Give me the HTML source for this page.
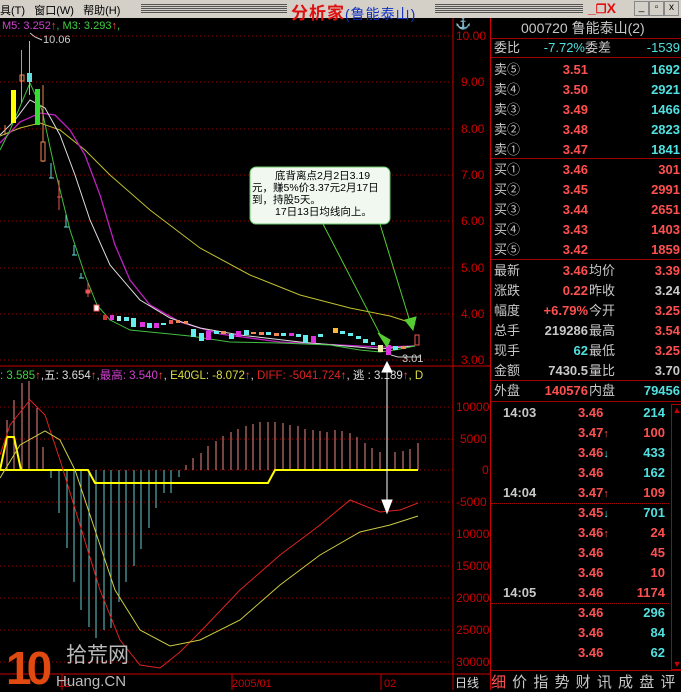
<!DOCTYPE html>
<html><head><meta charset="utf-8"><style>
*{margin:0;padding:0}
body{width:681px;height:690px;overflow:hidden;background:#000;font-family:"Liberation Sans","Noto Sans CJK SC",sans-serif;position:relative}
.menu{position:absolute;left:0;top:0;width:681px;height:18px;background:#d4d0c8;font-size:12px;color:#000}
.p{position:absolute;left:490px;top:18px;width:191px;height:672px;background:#000;border-left:1px solid #c00}
.t{position:absolute;font-size:13px;white-space:nowrap;line-height:16px}
.w{color:#c8c8c8}.r{color:#ff5050}.c{color:#50e0e0}
.hl{position:absolute;left:0;width:191px;height:1px;background:#a00000}
.col{position:absolute;font-size:13px;font-weight:bold}
.col div{height:20px;line-height:20px;white-space:nowrap}
.ar{font-size:11px;display:inline-block;width:10px;line-height:20px}
.btn{position:absolute;top:1px;width:13px;height:13px;border:1px solid #888;background:#d4d0c8;font-size:10px;line-height:12px;text-align:center}
</style></head><body>
<div class="menu">
<span style="position:absolute;left:0;top:2px;font-size:11px">具(T)&nbsp;&nbsp;&nbsp;窗口(W)&nbsp;&nbsp;&nbsp;帮助(H)</span>
<div style="position:absolute;left:141px;top:4px;width:146px;height:10px;background:repeating-linear-gradient(#555 0 1px,#d4d0c8 1px 2px)"></div>
<span style="position:absolute;left:291px;top:-1px;font-size:17px;font-weight:bold;color:#e01010;letter-spacing:1px;white-space:nowrap">分析家<span style="color:#1030c0;font-size:14px;font-weight:normal">(鲁能泰山)</span></span>
<div style="position:absolute;left:435px;top:4px;width:148px;height:10px;background:repeating-linear-gradient(#555 0 1px,#d4d0c8 1px 2px)"></div>
<span style="position:absolute;left:588px;top:0px;color:#e01010;font-weight:bold;font-size:14px">_<span style="font-size:12px">❐</span>X</span>
<span class="btn" style="left:634px">_</span>
<span class="btn" style="left:649px">▫</span>
<span class="btn" style="left:664px">x</span>
</div>

<svg style="position:absolute;left:0;top:18px" width="490" height="672" viewBox="0 18 490 672" font-family="Liberation Sans, Noto Sans CJK SC, sans-serif">
<g stroke="#900" stroke-dasharray="1,3" stroke-width="1">
<line x1="0" y1="36" x2="453" y2="36"/><line x1="0" y1="82" x2="453" y2="82"/><line x1="0" y1="129" x2="453" y2="129"/><line x1="0" y1="175" x2="453" y2="175"/><line x1="0" y1="221" x2="453" y2="221"/><line x1="0" y1="268" x2="453" y2="268"/><line x1="0" y1="314" x2="453" y2="314"/><line x1="0" y1="360" x2="453" y2="360"/>
<line x1="0" y1="407" x2="453" y2="407"/><line x1="0" y1="439" x2="453" y2="439"/><line x1="0" y1="470" x2="453" y2="470"/><line x1="0" y1="502" x2="453" y2="502"/><line x1="0" y1="534" x2="453" y2="534"/><line x1="0" y1="566" x2="453" y2="566"/><line x1="0" y1="598" x2="453" y2="598"/><line x1="0" y1="630" x2="453" y2="630"/><line x1="0" y1="662" x2="453" y2="662"/>
</g>
<g stroke="#c00" stroke-width="1">
<line x1="453" y1="18" x2="453" y2="690"/><line x1="0" y1="366" x2="490" y2="366"/><line x1="0" y1="674" x2="490" y2="674"/>
<line x1="62" y1="674" x2="62" y2="690"/><line x1="232" y1="674" x2="232" y2="690"/><line x1="381" y1="674" x2="381" y2="690"/>
</g>
<g fill="#c00" font-size="12">
<text x="456" y="40">10.00</text><text x="461" y="86">9.00</text><text x="461" y="133">8.00</text><text x="461" y="179">7.00</text><text x="461" y="225">6.00</text><text x="461" y="272">5.00</text><text x="461" y="318">4.00</text><text x="461" y="364">3.00</text>
<text x="456" y="411">10000</text><text x="460" y="443">5000</text><text x="482" y="474">0</text><text x="456" y="506">-5000</text><text x="456" y="538">10000</text><text x="456" y="570">15000</text><text x="456" y="602">20000</text><text x="456" y="634">25000</text><text x="456" y="666">30000</text>
</g>
<text x="455" y="27" fill="#e00" font-size="13">⚓</text>
<text x="455" y="687" fill="#ddd" font-size="12">日线</text>
<text x="58" y="687" fill="#c00" font-size="11">12</text><text x="232" y="687" fill="#c00" font-size="11">2005/01</text><text x="384" y="687" fill="#c00" font-size="11">02</text>
<text x="2" y="29" font-size="11"><tspan fill="#d040d0">M5: 3.252</tspan><tspan fill="#f44">↑</tspan><tspan fill="#40d040">, M3: 3.293</tspan><tspan fill="#f44">↑</tspan><tspan fill="#40d040">,</tspan></text>
<polyline points="30,33 35,37 42,40" stroke="#ccc" fill="none"/>
<text x="43" y="43" fill="#ccc" font-size="11">10.06</text>
<polyline fill="none" stroke="#c0c030" points="0,136 20,128 40,123 60,130 85,150 110,175 150,210 200,248 250,275 300,295 350,308 390,316 415,324"/>
<polyline fill="none" stroke="#c020c0" stroke-width="1.3" points="0,143 20,122 40,113 55,115 70,130 85,155 100,195 115,245 130,280 150,305 180,322 220,334 280,342 380,347 415,346"/>
<polyline fill="none" stroke="#ddd" points="0,135 15,120 30,100 45,108 60,135 75,175 90,220 110,265 140,300 170,318 200,328 240,335 300,342 380,349 415,346"/>
<polyline fill="none" stroke="#40c040" points="0,150 10,130 30,83 42,110 55,170 70,230 85,275 97,305 110,320 130,330 160,333 190,336 230,342 280,343 330,345 360,350 380,352 395,350 415,346"/>
<rect x="11" y="90" width="5" height="33" fill="#ff0"/>
<rect x="35" y="89" width="5" height="36" fill="#3d3"/>
<line x1="29.5" y1="41" x2="29.5" y2="95" stroke="#6dd"/><rect x="27" y="73" width="5" height="9" fill="#6dd"/>
<line x1="21.5" y1="50" x2="21.5" y2="103" stroke="#e85"/><rect x="20" y="75" width="4" height="6" fill="none" stroke="#e85"/>
<line x1="43" y1="85" x2="43" y2="162" stroke="#e85"/><rect x="41" y="142" width="4" height="19" fill="#000" stroke="#e85"/>
<line x1="5" y1="125" x2="5" y2="135" stroke="#e85"/>
<g stroke="#6dd"><line x1="51" y1="163" x2="51" y2="178"/><line x1="49" y1="178" x2="54" y2="178"/><line x1="66" y1="215" x2="66" y2="227"/><line x1="64" y1="227" x2="69" y2="227"/><line x1="74" y1="245" x2="74" y2="255"/><line x1="72" y1="255" x2="77" y2="255"/><line x1="81" y1="273" x2="81" y2="278"/><line x1="79" y1="278" x2="84" y2="278"/></g>
<g stroke="#e55"><line x1="59" y1="180" x2="59" y2="210"/><line x1="57" y1="197" x2="62" y2="197"/><line x1="88" y1="283" x2="88" y2="297"/><rect x="86" y="290" width="4" height="3" fill="#e55"/></g>
<rect x="94" y="305" width="5" height="6" fill="#fff" stroke="#e55"/>
<g>
<rect x="103" y="315" width="4" height="5" fill="#c33"/><rect x="110" y="315" width="4" height="5" fill="#d3d"/><rect x="117" y="316" width="4" height="5" fill="#aee"/><rect x="124" y="317" width="5" height="4" fill="#6ee"/><rect x="131" y="318" width="5" height="9" fill="#6ee"/><rect x="140" y="322" width="5" height="5" fill="#d3d"/><rect x="147" y="323" width="5" height="5" fill="#6ee"/><rect x="154" y="323" width="5" height="5" fill="#d3d"/><rect x="161" y="323" width="5" height="2" fill="#6ee"/><rect x="169" y="320" width="4" height="4" fill="#e55"/><rect x="176" y="320" width="4" height="3" fill="#e85"/><rect x="184" y="321" width="4" height="3" fill="#e85"/><rect x="191" y="329" width="5" height="8" fill="#6ee"/><rect x="199" y="333" width="5" height="8" fill="#6ee"/><rect x="206" y="331" width="5" height="9" fill="#d3d"/><rect x="214" y="331" width="5" height="3" fill="#6ee"/><rect x="221" y="331" width="5" height="3" fill="#e85"/><rect x="229" y="334" width="5" height="5" fill="#6ee"/><rect x="236" y="331" width="5" height="6" fill="#d3d"/><rect x="244" y="330" width="5" height="5" fill="#6ee"/><rect x="251" y="332" width="5" height="2" fill="#e85"/><rect x="259" y="332" width="5" height="3" fill="#e85"/><rect x="266" y="332" width="5" height="3" fill="#6ee"/><rect x="274" y="333" width="5" height="3" fill="#e85"/><rect x="281" y="333" width="5" height="3" fill="#6ee"/><rect x="289" y="333" width="5" height="3" fill="#d3d"/><rect x="296" y="334" width="5" height="3" fill="#6ee"/><rect x="303" y="335" width="5" height="8" fill="#6ee"/><rect x="311" y="336" width="5" height="7" fill="#d3d"/><rect x="318" y="334" width="5" height="3" fill="#6ee"/><rect x="333" y="328" width="5" height="5" fill="#fb3"/><rect x="340" y="331" width="5" height="3" fill="#6ee"/><rect x="348" y="333" width="5" height="3" fill="#6ee"/><rect x="356" y="336" width="5" height="3" fill="#6ee"/><rect x="363" y="339" width="5" height="4" fill="#6ee"/><rect x="371" y="342" width="4" height="3" fill="#6ee"/><rect x="378" y="345" width="5" height="7" fill="#eea"/><rect x="386" y="345" width="5" height="10" fill="#d3d"/><rect x="393" y="346" width="5" height="4" fill="#6ee"/><rect x="401" y="346" width="5" height="3" fill="#e85"/><rect x="415" y="335" width="4" height="10" fill="none" stroke="#e55"/>
</g>
<polyline points="391,355 398,357 420,357" stroke="#ccc" fill="none"/>
<text x="402" y="362" fill="#ccc" font-size="11">3.01</text>
<rect x="250" y="167" width="140" height="57" rx="6" fill="#f0f8f0" stroke="#6c6"/>
<g font-size="10.5" fill="#000"><text x="275" y="179">底背离点2月2日3.19</text><text x="252" y="191">元，赚5%价3.37元2月17日</text><text x="252" y="203">到，持股5天。</text><text x="275" y="215">17日13日均线向上。</text></g>
<g stroke="#5c3" fill="#5c3"><line x1="323" y1="224" x2="383" y2="340"/><polygon points="378,333 390,340 387,347"/><line x1="380" y1="224" x2="411" y2="325"/><polygon points="405,320 416,317 413,330"/></g>
<text x="0" y="379" font-size="11.5"><tspan fill="#40d040">: 3.585</tspan><tspan fill="#f44">↑</tspan><tspan fill="#ddd">,五: 3.654</tspan><tspan fill="#f44">↑</tspan><tspan fill="#ddd">,</tspan><tspan fill="#d040d0">最高: 3.540</tspan><tspan fill="#f44">↑</tspan><tspan fill="#ddd">,</tspan><tspan fill="#dd4"> E40GL: -8.072</tspan><tspan fill="#f44">↑</tspan><tspan fill="#ddd">,</tspan><tspan fill="#d22"> DIFF: -5041.724</tspan><tspan fill="#f44">↑</tspan><tspan fill="#ddd">, 逃</tspan><tspan fill="#fff">  </tspan><tspan fill="#ddd">: 3.189</tspan><tspan fill="#f44">↑</tspan><tspan fill="#dd4">, D</tspan></text>
<g stroke="#e88" stroke-width="1"><line x1="7" y1="470" x2="7" y2="420"/><line x1="14" y1="470" x2="14" y2="400"/><line x1="22" y1="470" x2="22" y2="383"/><line x1="29" y1="470" x2="29" y2="381"/><line x1="37" y1="470" x2="37" y2="408"/><line x1="43" y1="470" x2="43" y2="447"/>
<line x1="186" y1="470" x2="186" y2="465"/><line x1="193" y1="470" x2="193" y2="458"/><line x1="201" y1="470" x2="201" y2="453"/><line x1="208" y1="470" x2="208" y2="446"/><line x1="216" y1="470" x2="216" y2="441"/><line x1="223" y1="470" x2="223" y2="436"/><line x1="231" y1="470" x2="231" y2="432"/><line x1="238" y1="470" x2="238" y2="429"/><line x1="246" y1="470" x2="246" y2="426"/><line x1="253" y1="470" x2="253" y2="424"/><line x1="260" y1="470" x2="260" y2="422"/><line x1="268" y1="470" x2="268" y2="422"/><line x1="275" y1="470" x2="275" y2="422"/><line x1="283" y1="470" x2="283" y2="423"/><line x1="290" y1="470" x2="290" y2="425"/><line x1="298" y1="470" x2="298" y2="426"/><line x1="305" y1="470" x2="305" y2="429"/><line x1="313" y1="470" x2="313" y2="430"/><line x1="320" y1="470" x2="320" y2="431"/><line x1="327" y1="470" x2="327" y2="432"/><line x1="335" y1="470" x2="335" y2="430"/><line x1="342" y1="470" x2="342" y2="431"/><line x1="350" y1="470" x2="350" y2="433"/><line x1="357" y1="470" x2="357" y2="437"/><line x1="365" y1="470" x2="365" y2="443"/><line x1="372" y1="470" x2="372" y2="448"/><line x1="380" y1="470" x2="380" y2="452"/><line x1="395" y1="470" x2="395" y2="452"/><line x1="403" y1="470" x2="403" y2="451"/><line x1="410" y1="470" x2="410" y2="449"/><line x1="418" y1="470" x2="418" y2="443"/></g>
<g stroke="#6cc" stroke-width="1"><line x1="51" y1="470" x2="51" y2="478"/><line x1="59" y1="470" x2="59" y2="513"/><line x1="67" y1="470" x2="67" y2="548"/><line x1="74" y1="470" x2="74" y2="582"/><line x1="81" y1="470" x2="81" y2="610"/><line x1="89" y1="470" x2="89" y2="627"/><line x1="96" y1="470" x2="96" y2="638"/><line x1="104" y1="470" x2="104" y2="630"/><line x1="111" y1="470" x2="111" y2="628"/><line x1="119" y1="470" x2="119" y2="602"/><line x1="126" y1="470" x2="126" y2="582"/><line x1="134" y1="470" x2="134" y2="566"/><line x1="141" y1="470" x2="141" y2="549"/><line x1="149" y1="470" x2="149" y2="528"/><line x1="156" y1="470" x2="156" y2="508"/><line x1="164" y1="470" x2="164" y2="493"/><line x1="171" y1="470" x2="171" y2="493"/><line x1="179" y1="470" x2="179" y2="477"/></g>
<polyline fill="none" stroke="#ff0" stroke-width="2" points="0,470 88,470 95,483 268,483 275,470 418,470"/>
<polyline fill="none" stroke="#ff0" stroke-width="2" points="0,470 7,437 14,437 21,470"/>
<polyline fill="none" stroke="#d22" points="0,455 10,425 30,400 45,415 60,460 80,525 100,590 120,640 140,665 160,668 180,652 200,632 240,590 280,555 320,525 350,500 380,512 400,510 418,503"/>
<polyline fill="none" stroke="#cc4" points="0,478 20,445 45,431 60,440 75,470 95,530 115,590 140,630 170,646 200,640 240,620 280,585 320,555 360,532 390,525 418,516"/>
<g stroke="#fff" fill="#fff"><line x1="387" y1="370" x2="387" y2="510"/><polygon points="382,500 392,500 387,513"/><polygon points="382,372 392,372 387,362"/></g>
<text x="6" y="684" fill="#e04a10" font-size="46" font-weight="bold" letter-spacing="-5">10</text>
<text x="66" y="662" fill="#bbb" font-size="21">拾荒网</text>
<text x="56" y="686" fill="#bbb" font-size="15">Huang.CN</text>
</svg>

<div class="p">
<div class="t w" style="left:30px;top:2px;font-size:14px">000720 鲁能泰山(2)</div>
<div class="hl" style="top:20px"></div>
<div class="t w" style="left:3px;top:22px">委比</div><div class="t c" style="left:34px;top:22px;width:60px;text-align:right">-7.72%</div><div class="t w" style="left:94px;top:22px">委差</div><div class="t c" style="right:2px;top:22px">-1539</div>
<div class="hl" style="top:39px"></div>
<div style="position:absolute;left:3px;top:42px;font-size:13px;line-height:20px;color:#c8c8c8">卖⑤<br>卖④<br>卖③<br>卖②<br>卖①</div>
<div style="position:absolute;left:50px;width:47px;text-align:right;top:42px;font-size:13px;line-height:20px;color:#ff5050;font-weight:bold">3.51<br>3.50<br>3.49<br>3.48<br>3.47</div>
<div style="position:absolute;right:2px;text-align:right;top:42px;font-size:13px;line-height:20px;color:#50e0e0;font-weight:bold">1692<br>2921<br>1466<br>2823<br>1841</div>
<div class="hl" style="top:140px"></div>
<div style="position:absolute;left:3px;top:142px;font-size:13px;line-height:20px;color:#c8c8c8">买①<br>买②<br>买③<br>买④<br>买⑤</div>
<div style="position:absolute;left:50px;width:47px;text-align:right;top:142px;font-size:13px;line-height:20px;color:#ff5050;font-weight:bold">3.46<br>3.45<br>3.44<br>3.43<br>3.42</div>
<div style="position:absolute;right:2px;text-align:right;top:142px;font-size:13px;line-height:20px;color:#ff5050;font-weight:bold">301<br>2991<br>2651<br>1403<br>1859</div>
<div class="hl" style="top:241px"></div>
<div style="position:absolute;left:3px;top:243px;font-size:13px;line-height:20px;color:#c8c8c8">最新<br>涨跌<br>幅度<br>总手<br>现手<br>金额</div>
<div style="position:absolute;left:30px;width:67px;text-align:right;top:243px;font-size:13px;line-height:20px;font-weight:bold;color:#ff5050">3.46<br>0.22<br>+6.79%<br><span style="color:#c8c8c8">219286</span><br><span style="color:#50e0e0">62</span><br><span style="color:#c8c8c8">7430.5</span></div>
<div style="position:absolute;left:98px;top:243px;font-size:13px;line-height:20px;color:#c8c8c8">均价<br>昨收<br>今开<br>最高<br>最低<br>量比</div>
<div style="position:absolute;right:2px;text-align:right;top:243px;font-size:13px;line-height:20px;font-weight:bold;color:#ff5050">3.39<br><span style="color:#c8c8c8">3.24</span><br>3.25<br>3.54<br>3.25<br><span style="color:#c8c8c8">3.70</span></div>
<div class="hl" style="top:362px"></div>
<div class="t w" style="left:3px;top:365px">外盘</div><div class="t r" style="left:40px;top:365px;width:57px;text-align:right;font-weight:bold">140576</div><div class="t w" style="left:98px;top:365px">内盘</div><div class="t c" style="right:2px;top:365px;font-weight:bold">79456</div>
<div class="hl" style="top:383px"></div>
<div class="col" style="left:12px;top:385px;color:#c8c8c8"><div>14:03</div><div></div><div></div><div></div><div>14:04</div><div></div><div></div><div></div><div></div><div>14:05</div></div>
<div class="col" style="left:87px;top:385px;color:#ff5050"><div>3.46</div><div>3.47<span class="ar">↑</span></div><div>3.46<span class="ar c">↓</span></div><div>3.46</div><div>3.47<span class="ar">↑</span></div><div>3.45<span class="ar c">↓</span></div><div>3.46<span class="ar">↑</span></div><div>3.46</div><div>3.46</div><div>3.46</div><div>3.46</div><div>3.46</div><div>3.46</div></div>
<div class="col" style="right:17px;top:385px;text-align:right;color:#50e0e0"><div>214</div><div class="r">100</div><div>433</div><div>162</div><div class="r">109</div><div>701</div><div class="r">24</div><div class="r">45</div><div class="r">10</div><div class="r">1174</div><div>296</div><div>84</div><div>62</div></div>
<div style="position:absolute;left:0;top:485px;width:178px;border-top:1px dotted #a00"></div>
<div style="position:absolute;left:0;top:585px;width:178px;border-top:1px dotted #a00"></div>
<div style="position:absolute;left:180px;top:386px;width:10px;height:264px;border:1px solid #a00"><div style="color:#c00;font-size:9px;text-align:center">▲</div><div style="position:absolute;bottom:0;color:#c00;font-size:9px;width:10px;text-align:center">▼</div></div>
<div style="position:absolute;left:0;top:652px;width:191px;height:20px;font-size:15px;color:#c8c8c8;letter-spacing:1px;border-top:1px solid #a00"><span style="color:#ff5050">细</span> 价 指 势 财 讯 成 盘 评</div>
</div>
</body></html>
